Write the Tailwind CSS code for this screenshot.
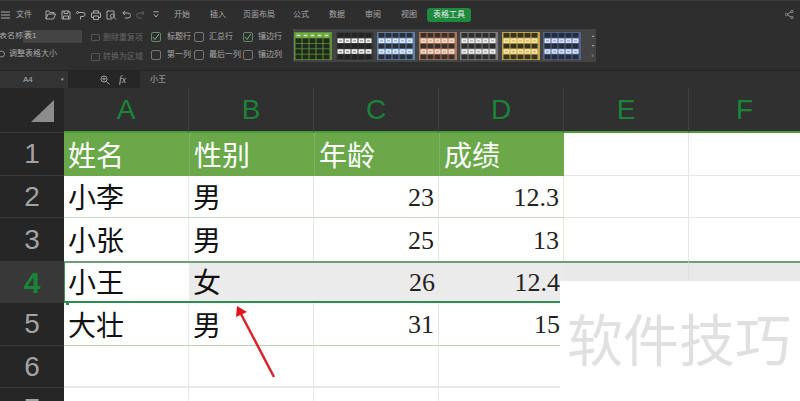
<!DOCTYPE html>
<html lang="zh">
<head>
<meta charset="UTF-8">
<title>表格工具</title>
<script src="https://cdn.jsdelivr.net/npm/@tailwindcss/browser@4"></script>
</head>
<body class="bg-white overflow-hidden font-['Liberation_Sans','Noto_Sans_CJK_SC',sans-serif]">
<div class="relative w-[800px] h-[401px] overflow-hidden">

  <!-- ribbon -->
  <div class="h-[70px] bg-[#2e2e2e] border-t border-[#3a3a3a] text-[#a9a9a9] text-[8px] leading-none">
    <!-- tabs -->
    <div class="h-[27px] flex items-center">
      <svg class="ml-[1px] w-[9px] h-[8px]" viewBox="0 0 9 8" fill="none" stroke="#a9a9a9"><path d="M0 1h9M0 4h9M0 7h9"/></svg>
      <span class="ml-[6px] w-[15px] whitespace-nowrap">文件</span>
      <div class="ml-[14px] flex gap-[5px] w-[128px] items-center">
        <svg class="w-[11px] h-[10px]" viewBox="0 0 11 10" fill="none" stroke="#a9a9a9"><path d="M1 9V1h3l1 1.500h4V4M1 9h7.500L10.500 4H3L1 9z"/></svg>
        <svg class="w-[10px] h-[10px]" viewBox="0 0 10 10" fill="none" stroke="#a9a9a9"><path d="M1 1h7l1 1v7H1zM3 1v2.500h4V1M2.500 9V6h5v3"/></svg>
        <svg class="w-[10px] h-[10px]" viewBox="0 0 10 10" fill="none" stroke="#a9a9a9"><path d="M2 2.500h5a2 2 0 0 1 0 4H4.500M4.500 6.500v3"/><circle cx="1.500" cy="2.500" r="1"/></svg>
        <svg class="w-[10px] h-[10px]" viewBox="0 0 10 10" fill="none" stroke="#a9a9a9"><path d="M2.500 3V.8h5V3M2.500 7.500H.5V3h9v4.500h-2M2.500 6h5v3.500h-5z"/></svg>
        <svg class="w-[11px] h-[10px]" viewBox="0 0 11 10" fill="none" stroke="#a9a9a9"><path d="M8 7V1H1v8h5"/><circle cx="6.500" cy="6" r="2"/><path d="M8 7.500l2 2"/></svg>
        <svg class="w-[9px] h-[9px]" viewBox="0 0 9 9" fill="none" stroke="#a9a9a9"><path d="M3 .8L.8 3 3 5M1 3h5a2.300 2.300 0 0 1 0 5H3"/></svg>
        <svg class="w-[9px] h-[9px]" viewBox="0 0 9 9" fill="none" stroke="#5e5e5e"><path d="M6 .8L8.200 3 6 5M8 3H3a2.300 2.300 0 0 0 0 5h3"/></svg>
        <svg class="ml-[3px] w-[6px] h-[7px]" viewBox="0 0 6 7" fill="none" stroke="#a9a9a9"><path d="M.5 .8h5M.8 3.200L3 6l2.200-2.800"/></svg>
      </div>
      <div class="ml-[1px] flex items-center gap-[20px] whitespace-nowrap">
        <span>开始</span><span>插入</span><span class="-ml-[3px]">页面布局</span><span class="-ml-[2px]">公式</span><span>数据</span><span>审阅</span><span>视图</span>
      </div>
      <span class="ml-[10px] w-[44px] h-[14px] rounded-[3px] bg-[#1e8a3e] text-[#e6f0e6] flex items-center justify-center whitespace-nowrap">表格工具</span>
      <svg class="ml-[314px] w-[9px] h-[9px]" viewBox="0 0 9 9" fill="none" stroke="#a0a0a0" stroke-width=".8"><circle cx="1.500" cy="4.500" r="1.200"/><circle cx="7" cy="1.500" r="1.200"/><circle cx="7" cy="7.500" r="1.200"/><path d="M2.500 4l3.500-2M2.500 5l3.500 2"/></svg>
    </div>
    <!-- tools -->
    <div class="h-[41px] flex items-start">
      <div class="w-[88px] -ml-[1px] pt-[1px] whitespace-nowrap">
        <div class="h-[14px] flex items-center">
          <span class="w-[24px] text-right pr-[1px] overflow-hidden">表名称:</span>
          <span class="w-[59px] h-[13px] bg-[#444444] flex items-center pl-[1px] text-[#b5b5b5]">表1</span>
        </div>
        <div class="mt-[5px] h-[12px] flex items-center">
          <svg class="w-[7px] h-[8px]" viewBox="0 0 7 8" fill="none" stroke="#8f8f8f"><circle cx="2.500" cy="4" r="3"/></svg>
          <span class="ml-[3px]">调整表格大小</span>
        </div>
      </div>
      <div class="ml-[4px] w-[60px] text-[#666666] whitespace-nowrap pt-[4px]">
        <div class="h-[11px] flex items-center gap-[3px]"><span class="w-[9px] h-[7px] border border-[#555555] rounded-[1px]"></span><span>删除重复项</span></div>
        <div class="mt-[8px] h-[11px] flex items-center gap-[3px]"><span class="w-[9px] h-[8px] border border-[#555555] rounded-[1px]"></span><span>转换为区域</span></div>
      </div>
      <div class="pt-[2px] grid grid-cols-[43px_49px_39px] grid-rows-[14px_14px] gap-y-[4px] whitespace-nowrap">
        <div class="flex items-center gap-[6px]"><span class="w-[10px] h-[10px] border border-[#5d8a68] rounded-[2px] flex items-center justify-center"><svg class="w-[8px] h-[8px]" viewBox="0 0 8 8" fill="none" stroke="#7fae87"><path d="M1 4l2 2.500L7 1"/></svg></span><span>标题行</span></div>
        <div class="flex items-center gap-[5px]"><span class="w-[10px] h-[10px] border border-[#777777] rounded-[2px]"></span><span>汇总行</span></div>
        <div class="flex items-center gap-[5px]"><span class="w-[10px] h-[10px] border border-[#5d8a68] rounded-[2px] flex items-center justify-center"><svg class="w-[8px] h-[8px]" viewBox="0 0 8 8" fill="none" stroke="#7fae87"><path d="M1 4l2 2.500L7 1"/></svg></span><span>镶边行</span></div>
        <div class="flex items-center gap-[6px]"><span class="w-[10px] h-[10px] border border-[#777777] rounded-[2px]"></span><span>第一列</span></div>
        <div class="flex items-center gap-[5px]"><span class="w-[10px] h-[10px] border border-[#777777] rounded-[2px]"></span><span>最后一列</span></div>
        <div class="flex items-center gap-[5px]"><span class="w-[10px] h-[10px] border border-[#777777] rounded-[2px]"></span><span>镶边列</span></div>
      </div>
      <!-- style gallery -->
      <div id="gallery" class="ml-[11px] mt-[1px] w-[303px] h-[33px] bg-[#444444] flex items-center pl-[1px] gap-[3.500px]"></div>
    </div>
  </div>

  <!-- formula bar -->
  <div class="h-[18px] bg-[#262626] border-t border-[#242424] flex items-center text-[8px] leading-none text-[#b0b0b0]">
    <div class="w-[68px] h-[17px] bg-[#333333] flex items-center pl-[23px]">A4<span class="ml-[28px] text-[5px]">▾</span></div>
    <svg class="ml-[32px] w-[10px] h-[10px]" viewBox="0 0 10 10" fill="none" stroke="#a0a0a0"><circle cx="4" cy="4" r="3"/><path d="M6.500 6.500l3 3M2.500 4h3M4 2.500v3"/></svg>
    <span class="ml-[9px] w-[21px] italic font-['Liberation_Serif',serif] text-[10px]">fx</span>
    <div class="flex-1 h-[17px] bg-[#303030] flex items-center pl-[10px]">小王</div>
  </div>

  <!-- sheet -->
  <div class="grid grid-cols-[64px_125px_125px_125px_125px_125px_111px] grid-rows-[45px_43px_42px_43px_42px_43px_42px_1fr] h-[313px]">
    <div class="bg-[#262626] border-b border-[#3c3c3c] flex items-end justify-end pb-[10px] pr-[10px]">
      <svg class="w-[23px] h-[22px]" viewBox="0 0 23 22"><path d="M23 0V22H0z" fill="#8c8c8c"/></svg>
    </div>
    <div class="bg-[#303030] border-r border-[#404040] border-b-2 border-b-[#4c9a3c] flex items-center justify-center text-[28px] text-[#1a8438]">A</div>
    <div class="bg-[#303030] border-r border-[#404040] border-b-2 border-b-[#4c9a3c] flex items-center justify-center text-[28px] text-[#1a8438]">B</div>
    <div class="bg-[#303030] border-r border-[#404040] border-b-2 border-b-[#4c9a3c] flex items-center justify-center text-[28px] text-[#1a8438]">C</div>
    <div class="bg-[#303030] border-r border-[#404040] border-b-2 border-b-[#4c9a3c] flex items-center justify-center text-[28px] text-[#1a8438]">D</div>
    <div class="bg-[#303030] border-r border-[#404040] border-b-2 border-b-[#4c9a3c] flex items-center justify-center text-[28px] text-[#1a8438]">E</div>
    <div class="bg-[#303030] border-b-2 border-b-[#4c9a3c] flex items-center justify-center text-[28px] text-[#1a8438]">F</div>

    <!-- row 1 -->
    <div class="bg-[#262626] border-b border-[#3c3c3c] flex items-center justify-center text-[28px] text-[#a3a3a3]">1</div>
    <div class="bg-[#6aa84a] text-white text-[28px] pl-[4px] pt-[5px] flex items-center">姓名</div>
    <div class="bg-[#6aa84a] text-white text-[28px] pl-[4px] pt-[5px] flex items-center border-l border-[#7cb45f]">性别</div>
    <div class="bg-[#6aa84a] text-white text-[28px] pl-[4px] pt-[5px] flex items-center border-l border-[#7cb45f]">年龄</div>
    <div class="bg-[#6aa84a] text-white text-[28px] pl-[4px] pt-[5px] flex items-center border-l border-[#7cb45f]">成绩</div>
    <div class="border-r border-b border-[#e6e6e6]"></div>
    <div class="border-b border-[#e6e6e6]"></div>

    <!-- row 2 -->
    <div class="bg-[#262626] border-b border-[#3c3c3c] flex items-center justify-center text-[28px] text-[#a3a3a3]">2</div>
    <div class="border-b border-[#c5dbbc] border-r border-r-[#e6e6e6] text-[28px] text-[#111111] pl-[4px] pt-[5px] flex items-center">小李</div>
    <div class="border-b border-[#c5dbbc] border-r border-r-[#e6e6e6] text-[28px] text-[#111111] pl-[4px] pt-[5px] flex items-center">男</div>
    <div class="border-b border-[#c5dbbc] border-r border-r-[#e6e6e6] text-[26px] text-[#222222] pr-[4px] pt-[1px] flex items-center justify-end font-['Liberation_Serif',serif]">23</div>
    <div class="border-b border-[#c5dbbc] border-r border-r-[#dfe9d8] text-[26px] text-[#222222] pr-[4px] pt-[1px] flex items-center justify-end font-['Liberation_Serif',serif]">12.3</div>
    <div class="border-r border-b border-[#e6e6e6]"></div>
    <div class="border-b border-[#e6e6e6]"></div>

    <!-- row 3 -->
    <div class="bg-[#262626] flex items-center justify-center text-[28px] text-[#a3a3a3]">3</div>
    <div class="border-r border-[#e6e6e6] text-[28px] text-[#111111] pl-[4px] pt-[5px] flex items-center">小张</div>
    <div class="border-r border-[#e6e6e6] text-[28px] text-[#111111] pl-[4px] pt-[5px] flex items-center">男</div>
    <div class="border-r border-[#e6e6e6] text-[26px] text-[#222222] pr-[4px] pt-[1px] flex items-center justify-end font-['Liberation_Serif',serif]">25</div>
    <div class="border-r border-[#dfe9d8] text-[26px] text-[#222222] pr-[4px] pt-[1px] flex items-center justify-end font-['Liberation_Serif',serif]">13</div>
    <div class="border-r border-[#e6e6e6]"></div>
    <div></div>

    <!-- row 4 -->
    <div class="bg-[#383838] flex items-center justify-center text-[30px] font-bold text-[#1a8438]">4</div>
    <div class="bg-white border-l border-t-2 border-b-2 border-l-[#3e9058] border-t-[#6d9f7c] border-b-[#2f8a4f] text-[28px] text-[#111111] pl-[3px] pt-[4px] flex items-center">小王</div>
    <div class="bg-[#ebebeb] border-t-2 border-b-2 border-t-[#6d9f7c] border-b-[#2f8a4f] text-[28px] text-[#111111] pl-[4px] pt-[4px] flex items-center">女</div>
    <div class="bg-[#ebebeb] border-t-2 border-b-2 border-t-[#6d9f7c] border-b-[#2f8a4f] text-[26px] text-[#222222] pr-[4px] flex items-center justify-end font-['Liberation_Serif',serif]">26</div>
    <div class="bg-[#ebebeb] border-t-2 border-b-2 border-t-[#6d9f7c] border-b-[#2f8a4f] text-[26px] text-[#222222] pr-[4px] flex items-center justify-end font-['Liberation_Serif',serif]">12.4</div>
    <div class="bg-[#e9e9e9] border-t-2 border-t-[#6d9f7c] border-r border-r-[#e0e0e0]"></div>
    <div class="bg-[#e9e9e9] border-t-2 border-t-[#6d9f7c]"></div>

    <!-- row 5 -->
    <div class="bg-[#262626] border-b border-[#3c3c3c] flex items-center justify-center text-[28px] text-[#a3a3a3]">5</div>
    <div class="border-b border-[#b9d6ab] border-r border-r-[#e6e6e6] text-[28px] text-[#111111] pl-[4px] pt-[5px] flex items-center">大壮</div>
    <div class="border-b border-[#b9d6ab] border-r border-r-[#e6e6e6] text-[28px] text-[#111111] pl-[4px] pt-[5px] flex items-center">男</div>
    <div class="border-b border-[#b9d6ab] border-r border-r-[#e6e6e6] text-[26px] text-[#222222] pr-[4px] pt-[1px] flex items-center justify-end font-['Liberation_Serif',serif]">31</div>
    <div class="border-b border-[#b9d6ab] text-[26px] text-[#222222] pr-[4px] pt-[1px] flex items-center justify-end font-['Liberation_Serif',serif]">15</div>
    <div></div>
    <div></div>

    <!-- row 6 -->
    <div class="bg-[#262626] border-b border-[#3c3c3c] flex items-center justify-center text-[28px] text-[#a3a3a3]">6</div>
    <div class="border-r border-b-2 border-[#e8e8e8]"></div>
    <div class="border-r border-b-2 border-[#e8e8e8]"></div>
    <div class="border-r border-b-2 border-[#e8e8e8]"></div>
    <div class="border-b-2 border-[#e8e8e8]"></div>
    <div></div>
    <div></div>

    <!-- row 7 -->
    <div class="bg-[#262626] flex items-start justify-center text-[28px] text-[#a3a3a3] overflow-hidden">7</div>
    <div class="border-r border-[#e8e8e8]"></div>
    <div class="border-r border-[#e8e8e8]"></div>
    <div class="border-r border-[#e8e8e8]"></div>
    <div></div>
    <div></div>
    <div></div>
  </div>

  <!-- fill handle -->
  <div class="absolute left-[66px] top-[302px] w-[3px] h-[3px] bg-[#2f8a4f]"></div>

  <!-- watermark patch -->
  <div class="absolute left-[560px] top-[281px] w-[240px] h-[120px] bg-white pl-[7px] pt-[20px] text-[56px] leading-[72px] text-[#e0e0e0] whitespace-nowrap font-['Noto_Sans_CJK_SC',sans-serif]">软件技巧</div>

  <!-- red arrow -->
  <svg class="absolute left-[230px] top-[300px] w-[50px] h-[85px]" viewBox="0 0 50 85" fill="none">
    <path d="M44 77L11 14" stroke="#d6262c" stroke-width="2.500"/>
    <path d="M7 6L6 17L17 12z" fill="#e0161e"/>
  </svg>
</div>

<script>
// table style thumbnails: frame, band cell, dash, plain cell
const styles = [
  ['#5f8f3e', '#7ab648', '#dff0cc', '#1f2a1c'],
  ['#3a3a3a', '#eeeeee', '#777777', '#242424'],
  ['#5f7fa8', '#dbe9f8', '#7f9fc8', '#2a2f38'],
  ['#a8765a', '#f3d8c6', '#c89878', '#38302a'],
  ['#7d7d7d', '#ececec', '#999999', '#2e2e2e'],
  ['#c2a450', '#f6e3a0', '#c8aa58', '#38331f'],
  ['#50648f', '#d8e0f5', '#7f90bb', '#262c3a'],
];
const gallery = document.getElementById('gallery');
styles.forEach(function (s, i) {
  let rects = '';
  for (let r = 0; r < 5; r++) {
    for (let c = 0; c < 5; c++) {
      const band = i === 0 ? r === 0 : (r === 1 || r === 3);
      const x = 1.5 + c * 7;
      const y = 1 + r * 5.4;
      rects += `<rect x="${x}" y="${y}" width="6" height="4.6" fill="${band ? s[1] : s[3]}"/>`;
      if (band) rects += `<rect x="${x + 1.5}" y="${y + 2}" width="3" height="1" fill="${s[2]}"/>`;
    }
  }
  gallery.insertAdjacentHTML('beforeend',
    `<svg width="38" height="28" viewBox="0 0 38 28"><rect width="38" height="28" fill="${s[0]}"/>${rects}</svg>`);
});
gallery.insertAdjacentHTML('beforeend',
  '<div class="ml-[7px] h-[24px] flex flex-col justify-between items-center text-[4px] leading-none text-[#bdbdbd]"><span>▴</span><span>▾</span><span>≡</span></div>');
</script>
</body>
</html>
